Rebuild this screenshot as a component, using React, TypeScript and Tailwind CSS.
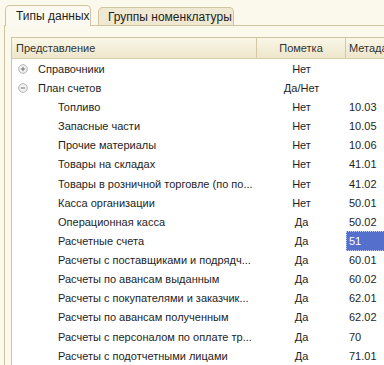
import * as React from "react";

type Row = {
   name: string;
   level: 0 | 1;
   mark: string;
   meta?: string;
   toggle?: "plus" | "minus";
   selected?: boolean;
};

const rows: Row[] = [
   { name: "Справочники", level: 0, mark: "Нет", toggle: "plus" },
   { name: "План счетов", level: 0, mark: "Да/Нет", toggle: "minus" },
   { name: "Топливо", level: 1, mark: "Нет", meta: "10.03" },
   { name: "Запасные части", level: 1, mark: "Нет", meta: "10.05" },
   { name: "Прочие материалы", level: 1, mark: "Нет", meta: "10.06" },
   { name: "Товары на складах", level: 1, mark: "Нет", meta: "41.01" },
   { name: "Товары в розничной торговле (по по...", level: 1, mark: "Нет", meta: "41.02" },
   { name: "Касса организации", level: 1, mark: "Нет", meta: "50.01" },
   { name: "Операционная касса", level: 1, mark: "Да", meta: "50.02" },
   { name: "Расчетные счета", level: 1, mark: "Да", meta: "51", selected: true },
   { name: "Расчеты с поставщиками и подрядч...", level: 1, mark: "Да", meta: "60.01" },
   { name: "Расчеты по авансам выданным", level: 1, mark: "Да", meta: "60.02" },
   { name: "Расчеты с покупателями и заказчик...", level: 1, mark: "Да", meta: "62.01" },
   { name: "Расчеты по авансам полученным", level: 1, mark: "Да", meta: "62.02" },
   { name: "Расчеты с персоналом по оплате тр...", level: 1, mark: "Да", meta: "70" },
   { name: "Расчеты с подотчетными лицами", level: 1, mark: "Да", meta: "71.01" },
];

function Toggle({ kind }: { kind: "plus" | "minus" }) {
   return (
      <svg width="10" height="10" viewBox="0 0 10 10">
         <circle cx="5" cy="5" r="4.3" fill="#f4f4f4" stroke="#a8a8a8" strokeWidth="0.9" />
         <path d="M2.8 5h4.4" stroke="#707070" strokeWidth="1" />
         {kind === "plus" ? <path d="M5 2.8v4.4" stroke="#707070" strokeWidth="1" /> : null}
      </svg>
   );
}

export default function App() {
   return (
      <div
         className="h-[365px] w-[384px] overflow-hidden bg-[#fbf8ec] text-[11px] text-[#1e1e1e]"
         style={{ fontFamily: '"Liberation Sans", Arial, sans-serif' }}>
         {/* tabs */}
         <div className="flex h-[25px] items-end pl-[5px] text-[12px]">
            <div className="relative z-10 -mb-px flex h-[21px] w-[86px] items-center rounded-t-[5px] border border-b-0 border-[#cfc5a2] bg-[#fcfaf0] pl-[10px]">
               Типы данных
            </div>
            <div className="ml-[7px] flex h-[18px] w-[136px] items-center rounded-t-[5px] border border-b-0 border-[#cfc5a2] bg-[#efe9d3] pl-[9px]">
               Группы номенклатуры
            </div>
         </div>

         {/* panel */}
         <div className="ml-[4px] h-[340px] border-l border-t border-[#cfc5a2] bg-[#fbf8ec] pl-[6px] pt-[11px]">
            <div className="w-[420px] border-l border-t border-[#cfc5a2] bg-white">
               <div className="flex h-[21px] items-center border-b border-[#d8cfae] bg-gradient-to-b from-[#faf7e8] to-[#ede6ca] text-[#333]">
                  <div className="flex h-full w-[245px] items-center border-r border-[#d3c9a6] pl-[4px]">Представление</div>
                  <div className="flex h-full w-[89px] items-center justify-center border-r border-[#d3c9a6]">Пометка</div>
                  <div className="flex h-full flex-1 items-center pl-[3px]">Метаданные</div>
               </div>
               {rows.map((row) => (
                  <div key={row.name} className="flex h-[19.13px] items-center pt-[1px]">
                     <div className="flex w-[245px] items-center whitespace-nowrap">
                        {row.level === 0 ? (
                           <>
                              <span className="ml-[6px] flex w-[20px] items-center">
                                 {row.toggle ? <Toggle kind={row.toggle} /> : null}
                              </span>
                              <span>{row.name}</span>
                           </>
                        ) : (
                           <span className="ml-[46px]">{row.name}</span>
                        )}
                     </div>
                     <div className="w-[89px] text-center">{row.mark}</div>
                     <div className="flex h-full flex-1 items-center">
                        {row.selected ? (
                           <div className="flex h-[20px] w-full items-center border border-dotted border-[#c7d0f0] bg-[#5570cc] pl-[2px] text-white">
                              {row.meta}
                           </div>
                        ) : (
                           <span className="pl-[3px]">{row.meta}</span>
                        )}
                     </div>
                  </div>
               ))}
            </div>
         </div>
      </div>
   );
}
